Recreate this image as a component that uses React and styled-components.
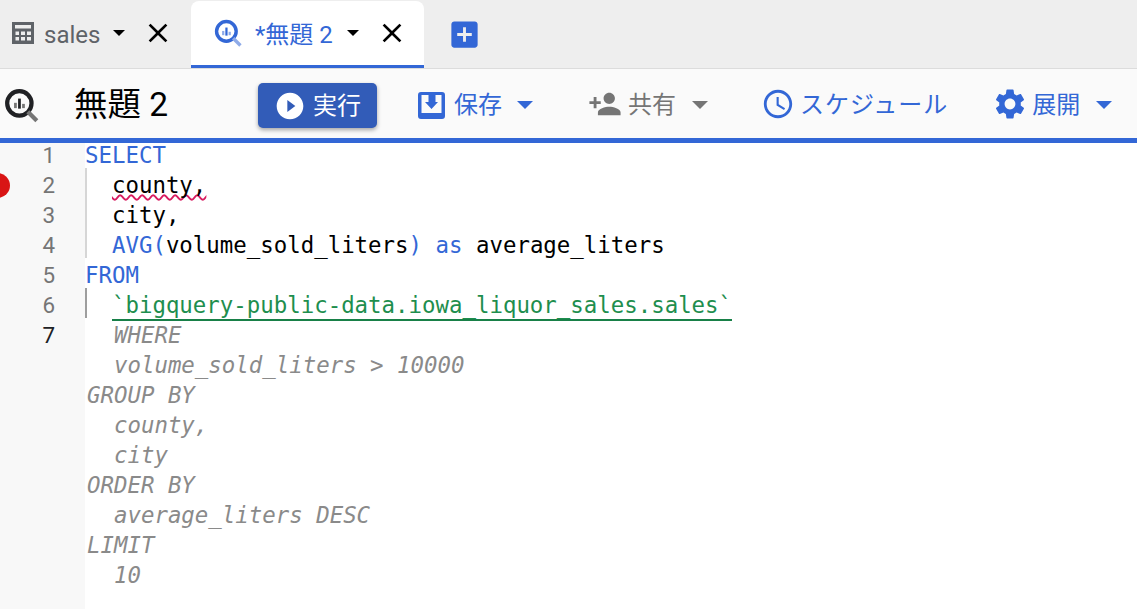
import React from 'react'
import styled, { createGlobalStyle } from 'styled-components'

const GlobalStyle = createGlobalStyle`
  html, body {
    margin: 0;
    padding: 0;
    background: #fff;
    overflow: hidden;
  }
`
const UI_FONT = `Roboto, "Noto Sans CJK JP", sans-serif`

const Page = styled.div`
  width: 1137px;
  height: 609px;
  display: flex;
  flex-direction: column;
  font-family: ${UI_FONT};
  overflow: hidden;
`
const TabBar = styled.div`
  height: 68px;
  flex: none;
  display: flex;
  align-items: stretch;
  background: #eeeeee;
  border-bottom: 1px solid #dcdcdc;
`
const Tab = styled.div`
  width: ${p => p.$w}px;
  margin-top: 1px;
  box-sizing: border-box;
  display: flex;
  align-items: center;
  padding-left: ${p => p.$pad}px;
  background: ${p => (p.$active ? '#fff' : 'transparent')};
  border-bottom: 3px solid ${p => (p.$active ? '#3367d6' : 'transparent')};
  border-radius: 8px 8px 0 0;
`
const TabLabel = styled.span`
  font-size: 24px;
  color: ${p => (p.$active ? '#3367d6' : '#5f6368')};
  margin-left: ${p => p.$gap}px;
  margin-top: ${p => (p.$active ? -1 : 4)}px;
  white-space: pre;
`
const Caret = styled.span`
  display: inline-block;
  width: 0;
  height: 0;
  border-left: ${p => p.$size}px solid transparent;
  border-right: ${p => p.$size}px solid transparent;
  border-top: ${p => p.$size}px solid ${p => p.$color || '#000'};
  margin-left: ${p => p.$gap}px;
  margin-top: ${p => p.$top || 0}px;
  flex: none;
`
const Icon = styled.svg`
  display: block;
  flex: none;
  width: ${p => p.$size}px;
  height: ${p => p.$size}px;
  margin-left: ${p => p.$left || 0}px;
  margin-top: ${p => p.$top || 0}px;
  fill: ${p => p.$color || 'currentColor'};
`
const AddTab = styled.div`
  display: flex;
  align-items: center;
  margin-left: 23px;
`
const Toolbar = styled.div`
  height: 65px;
  padding-top: 4px;
  flex: none;
  display: flex;
  align-items: center;
  background: #fafafa;
  border-bottom: 5px solid #3367d6;
`
const Title = styled.div`
  width: 184px;
  margin-left: 34px;
  padding-bottom: 8px;
  font-size: 33.5px;
  color: #000;
  white-space: pre;
`
const RunButton = styled.button`
  width: 119px;
  height: 45px;
  flex: none;
  border: none;
  border-radius: 5px;
  background: #325cb8;
  color: #fff;
  display: flex;
  align-items: center;
  padding: 0 0 0 16px;
  gap: 7px;
  font: 24px ${UI_FONT};
  box-shadow: 0 2px 4px rgba(0, 0, 0, 0.35);
`
const RunLabel = styled.span`
  padding-bottom: 5px;
`
const Action = styled.div`
  display: flex;
  align-items: center;
  margin-left: ${p => p.$left}px;
  margin-bottom: 4px;
  color: ${p => (p.$muted ? '#757575' : '#3367d6')};
  font-size: 24px;
  white-space: pre;
`
const ActionLabel = styled.span`
  margin-left: ${p => p.$gap}px;
  padding-bottom: 2px;
  letter-spacing: ${p => p.$spacing || 0}px;
`
const Editor = styled.div`
  flex: 1;
  display: flex;
  background: #fff;
`
const Gutter = styled.div`
  position: relative;
  width: 85px;
  flex: none;
  background: #f8f8f8;
`
const LineNumber = styled.div`
  height: 30px;
  line-height: 24px;
  width: 55px;
  text-align: right;
  font-size: 22.4px;
  color: ${p => (p.$current ? '#202124' : '#757575')};
`
const ErrorDot = styled.span`
  position: absolute;
  left: -15px;
  top: 30px;
  width: 25px;
  height: 25px;
  border-radius: 50%;
  background: #d91515;
`
const Code = styled.div`
  flex: 1;
  font-family: "DejaVu Sans Mono", monospace;
  font-size: 22.4px;
`
const Line = styled.div`
  position: relative;
  height: 30px;
  line-height: 24px;
  white-space: pre;
  color: #000;
  &::before {
    content: '';
    display: ${p => (p.$guide ? 'block' : 'none')};
    position: absolute;
    left: 0;
    top: -5px;
    bottom: 5px;
    width: 2px;
    background: ${p => (p.$guide === 'dark' ? '#9e9e9e' : '#d6d6d6')};
  }
`
const Keyword = styled.span`
  color: #3367d6;
`
const Str = styled.span`
  color: #1e8e4e;
  border-bottom: 2px solid #188048;
  padding-bottom: 1px;
`
const Ghost = styled.span`
  color: #8a8a8a;
  font-style: italic;
  padding-left: 2px;
`
const Squiggle = styled.span`
  text-decoration: underline wavy #d81b60;
  text-decoration-thickness: 2px;
  text-decoration-skip-ink: none;
  text-underline-offset: 1px;
`

const PATHS = {
  close: 'M19 6.41L17.59 5 12 10.59 6.41 5 5 6.41 10.59 12 5 17.59 6.41 19 12 13.41 17.59 19 19 17.59 13.41 12z',
  addBox: 'M19 3H5c-1.11 0-2 .9-2 2v14c0 1.1.89 2 2 2h14c1.1 0 2-.9 2-2V5c0-1.1-.9-2-2-2zm-2 10h-4v4h-2v-4H7v-2h4V7h2v4h4v2z',
  play: 'M12 2C6.48 2 2 6.48 2 12s4.48 10 10 10 10-4.48 10-10S17.52 2 12 2zm-2 14.5v-9l6 4.5-6 4.5z',
  personAdd: 'M15 12c2.21 0 4-1.79 4-4s-1.79-4-4-4-4 1.79-4 4 1.79 4 4 4zm-9-2V7H4v3H1v2h3v3h2v-3h3v-2H6zm9 4c-2.67 0-8 1.34-8 4v2h16v-2c0-2.66-5.33-4-8-4z',
  schedule: 'M11.99 2C6.47 2 2 6.48 2 12s4.47 10 9.99 10C17.52 22 22 17.52 22 12S17.52 2 11.99 2zM12 20c-4.42 0-8-3.58-8-8s3.58-8 8-8 8 3.58 8 8-3.58 8-8 8zm.5-13H11v6l5.25 3.15.75-1.23-4.5-2.67z',
  settings: 'M19.14 12.94c.04-.3.06-.61.06-.94 0-.32-.02-.64-.07-.94l2.03-1.58c.18-.14.23-.41.12-.61l-1.92-3.32c-.12-.22-.37-.29-.59-.22l-2.39.96c-.5-.38-1.03-.7-1.62-.94l-.36-2.54c-.04-.24-.24-.41-.48-.41h-3.84c-.24 0-.43.17-.47.41l-.36 2.54c-.59.24-1.13.57-1.62.94l-2.39-.96c-.22-.08-.47 0-.59.22L2.74 8.87c-.12.21-.08.47.12.61l2.03 1.58c-.05.3-.09.63-.09.94s.02.64.07.94l-2.03 1.58c-.18.14-.23.41-.12.61l1.92 3.32c.12.22.37.29.59.22l2.39-.96c.5.38 1.03.7 1.62.94l.36 2.54c.05.24.24.41.48.41h3.84c.24 0 .44-.17.47-.41l.36-2.54c.59-.24 1.13-.56 1.62-.94l2.39.96c.22.08.47 0 .59-.22l1.92-3.32c.12-.22.07-.47-.12-.61l-2.01-1.58zM12 15.6c-1.98 0-3.6-1.62-3.6-3.6s1.62-3.6 3.6-3.6 3.6 1.62 3.6 3.6-1.62 3.6-3.6 3.6z',
}

function MaterialIcon({ name, size = 24, color, left }) {
  return (
    <Icon viewBox="0 0 24 24" $size={size} $color={color} $left={left}>
      <path d={PATHS[name]} />
    </Icon>
  )
}

function TableIcon() {
  return (
    <Icon viewBox="0 0 22 22" $size={22} $color="#5f6368">
      <path fillRule="evenodd" d="M0 0h22v22H0zM3 3v3.500h16V3zM3.500 9.500V13H7V9.500zM9 9.500V13h4V9.500zM15 9.500V13h4V9.500zM3.500 15v3.500H7V15zM9 15v3.500h4V15zM15 15v3.500h4V15z" />
    </Icon>
  )
}

function SaveIcon() {
  return (
    <Icon viewBox="0 0 27 27" $size={27} $top={4}>
      <path fillRule="evenodd" d="M3 0h21a3 3 0 0 1 3 3v21a3 3 0 0 1-3 3H3a3 3 0 0 1-3-3V3a3 3 0 0 1 3-3zM3.500 3v18h20V3h-6v7H20l-6.500 7L7 10h3.500V3z" />
    </Icon>
  )
}

function QueryLogo({ size, ring, handle, bars, left }) {
  return (
    <Icon viewBox="0 0 34 34" $size={size} $left={left} $color="none">
      <circle cx="14.500" cy="14.500" r="11.500" fill="none" stroke={ring} strokeWidth="4" />
      <path d="M22.500 22.500L31 31" stroke={handle} strokeWidth="4" />
      <rect x="9.500" y="14" width="2.600" height="5" fill={bars} />
      <rect x="13.300" y="10" width="2.600" height="9.500" fill={ring} />
      <rect x="17.100" y="15" width="2.600" height="4" fill={bars} />
    </Icon>
  )
}

const LINE_NUMBERS = [1, 2, 3, 4, 5, 6, 7]

export default function App() {
  return (
    <Page>
      <GlobalStyle />
      <TabBar>
        <Tab $w={191} $pad={12}>
          <TableIcon />
          <TabLabel $gap={10}>sales</TabLabel>
          <Caret $size={6} $gap={13} />
          <MaterialIcon name="close" size={32} color="#000" left={17} />
        </Tab>
        <Tab $active $w={233} $pad={23}>
          <QueryLogo size={29} ring="#3367d6" handle="#8fabe8" bars="#8fabe8" />
          <TabLabel $active $gap={12}>*無題 2</TabLabel>
          <Caret $size={6} $gap={14} />
          <MaterialIcon name="close" size={32} color="#000" left={17} />
        </Tab>
        <AddTab>
          <MaterialIcon name="addBox" size={35} color="#3367d6" />
        </AddTab>
      </TabBar>
      <Toolbar>
        <QueryLogo size={36} ring="#202124" handle="#757575" bars="#757575" left={4} />
        <Title>無題 2</Title>
        <RunButton>
          <MaterialIcon name="play" size={32} color="#fff" />
          <RunLabel>実行</RunLabel>
        </RunButton>
        <Action $left={41}>
          <SaveIcon />
          <ActionLabel $gap={9}>保存</ActionLabel>
          <Caret $size={8} $gap={15} $top={2} $color="#3367d6" />
        </Action>
        <Action $muted $left={55}>
          <MaterialIcon name="personAdd" size={34} color="#757575" />
          <ActionLabel $gap={6}>共有</ActionLabel>
          <Caret $size={8} $gap={16} $top={2} $color="#757575" />
        </Action>
        <Action $left={53}>
          <MaterialIcon name="schedule" size={34} />
          <ActionLabel $gap={5} $spacing={1}>スケジュール</ActionLabel>
        </Action>
        <Action $left={44}>
          <MaterialIcon name="settings" size={36} />
          <ActionLabel $gap={4}>展開</ActionLabel>
          <Caret $size={8} $gap={16} $top={2} $color="#3367d6" />
        </Action>
      </Toolbar>
      <Editor>
        <Gutter>
          <ErrorDot />
          {LINE_NUMBERS.map(n => (
            <LineNumber key={n} $current={n === 7}>{n}</LineNumber>
          ))}
        </Gutter>
        <Code>
          <Line><Keyword>SELECT</Keyword></Line>
          <Line $guide="light">  <Squiggle>county,</Squiggle></Line>
          <Line $guide="light">  city,</Line>
          <Line $guide="light">  <Keyword>AVG(</Keyword>volume_sold_liters<Keyword>)</Keyword> <Keyword>as</Keyword> average_liters</Line>
          <Line><Keyword>FROM</Keyword></Line>
          <Line $guide="dark">  <Str>`bigquery-public-data.iowa_liquor_sales.sales`</Str></Line>
          <Line>  <Ghost>WHERE</Ghost></Line>
          <Line>  <Ghost>volume_sold_liters &gt; 10000</Ghost></Line>
          <Line><Ghost>GROUP BY</Ghost></Line>
          <Line>  <Ghost>county,</Ghost></Line>
          <Line>  <Ghost>city</Ghost></Line>
          <Line><Ghost>ORDER BY</Ghost></Line>
          <Line>  <Ghost>average_liters DESC</Ghost></Line>
          <Line><Ghost>LIMIT</Ghost></Line>
          <Line>  <Ghost>10</Ghost></Line>
        </Code>
      </Editor>
    </Page>
  )
}
